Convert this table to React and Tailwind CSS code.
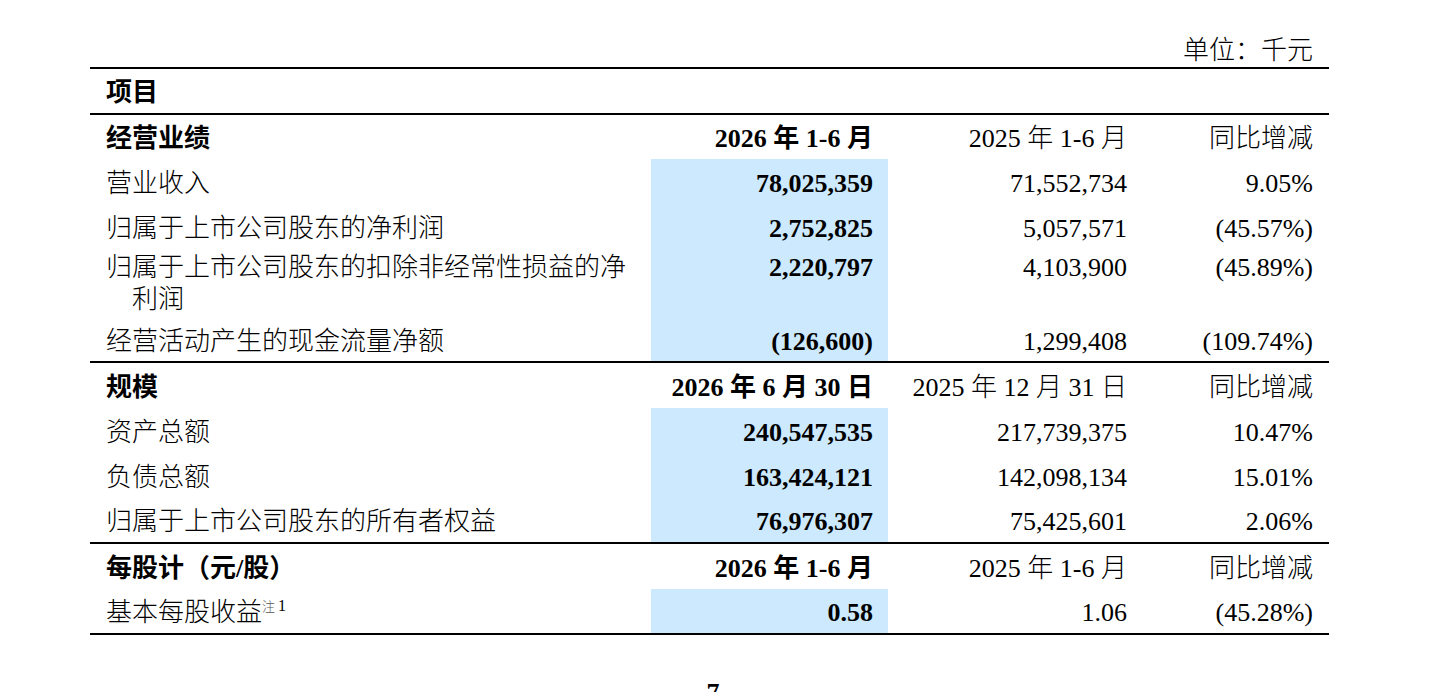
import React from "react";

const HL = "bg-[#cce9fd]";

function Cell({ children, className = "" }) {
  return <div className={"flex items-center pt-[4px] " + className}>{children}</div>;
}

function Row({ h, label, bold, c2, c2bold = true, c3, c4, hl }) {
  return (
    <div className={"grid grid-cols-[561px_237px_252px_189px] font-light " + h}>
      <Cell className={"pl-[16px] " + (bold ? "font-bold" : "")}>{label}</Cell>
      <Cell className={"justify-end pr-[15px] " + (c2bold ? "font-bold " : "") + (hl ? HL : "")}>{c2}</Cell>
      <Cell className="justify-end pr-[13px]">{c3}</Cell>
      <Cell className="justify-end pr-[16px]">{c4}</Cell>
    </div>
  );
}

export default function App() {
  return (
    <div className="w-[1438px] h-[692px] bg-white overflow-hidden text-black text-[26px] leading-[32px] font-['Liberation_Serif','Noto_Sans_CJK_SC',serif]">
      <div className="ml-[90px] w-[1239px]">
        <div className="h-[67px] pt-[35px] pr-[16px] text-right font-light">单位：千元</div>
        <div className="border-t-2 border-black">
          <Row h="h-[44px]" label="项目" bold />
        </div>
        <div className="border-t-2 border-black">
          <Row h="h-[44px]" label="经营业绩" bold c2="2026 年 1-6 月" c3="2025 年 1-6 月" c4="同比增减" />
          <Row h="h-[46px]" label="营业收入" c2="78,025,359" c3="71,552,734" c4="9.05%" hl />
          <Row h="h-[44px]" label="归属于上市公司股东的净利润" c2="2,752,825" c3="5,057,571" c4="(45.57%)" hl />
          <div className="grid grid-cols-[561px_237px_252px_189px] h-[69px] font-light">
            <div className="pl-[16px] pt-[3px] whitespace-nowrap">
              <div>归属于上市公司股东的扣除非经常性损益的净</div>
              <div className="pl-[26px]">利润</div>
            </div>
            <div className={"flex justify-end items-start pt-[3px] pr-[15px] font-bold " + HL}>2,220,797</div>
            <div className="flex justify-end items-start pt-[3px] pr-[13px]">4,103,900</div>
            <div className="flex justify-end items-start pt-[3px] pr-[16px]">(45.89%)</div>
          </div>
          <Row h="h-[43px]" label="经营活动产生的现金流量净额" c2="(126,600)" c3="1,299,408" c4="(109.74%)" hl />
        </div>
        <div className="border-t-2 border-black">
          <Row h="h-[45px]" label="规模" bold c2="2026 年 6 月 30 日" c3="2025 年 12 月 31 日" c4="同比增减" />
          <Row h="h-[45px]" label="资产总额" c2="240,547,535" c3="217,739,375" c4="10.47%" hl />
          <Row h="h-[45px]" label="负债总额" c2="163,424,121" c3="142,098,134" c4="15.01%" hl />
          <Row h="h-[44px]" label="归属于上市公司股东的所有者权益" c2="76,976,307" c3="75,425,601" c4="2.06%" hl />
        </div>
        <div className="border-t-2 border-black">
          <Row h="h-[45px]" label="每股计（元/股）" bold c2="2026 年 1-6 月" c3="2025 年 1-6 月" c4="同比增减" />
          <Row
            h="h-[44px]"
            label={
              <span>
                基本每股收益
                <span className="relative -top-[10px] text-[13px] leading-none text-[#555]">注</span>
                <span className="relative -top-[10px] text-[16px] leading-none pl-[3px]">1</span>
              </span>
            }
            c2="0.58"
            c3="1.06"
            c4="(45.28%)"
            hl
          />
        </div>
        <div className="border-t-2 border-black" />
      </div>
      <div className="mt-[42px] pl-[700px] w-[726px] font-bold">
        <span className="inline-block w-[26px] text-center">7</span>
      </div>
    </div>
  );
}
